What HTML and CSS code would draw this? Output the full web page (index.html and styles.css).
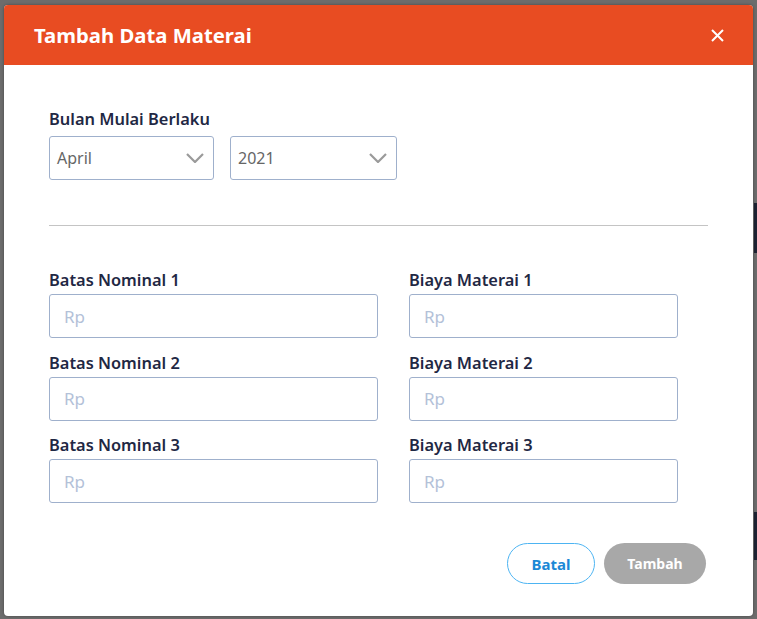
FILE: index.html
```html
<!DOCTYPE html>
<html lang="id">
<head>
<meta charset="utf-8">
<title>Tambah Data Materai</title>
<link rel="stylesheet" href="styles.css">
</head>
<body>
<div class="backdrop">
  <div class="modal">
    <header class="modal-header">
      <h2 class="modal-title">Tambah Data Materai</h2>
      <button class="close-btn" aria-label="Tutup">
        <svg width="13" height="13" viewBox="0 0 13 13"><path d="M1 1 L12 12 M12 1 L1 12" stroke="#fff" stroke-width="2" fill="none"/></svg>
      </button>
    </header>
    <div class="modal-body">
      <div class="period">
        <div class="label">Bulan Mulai Berlaku</div>
        <div class="selects">
          <div class="select select-month">
            <span>April</span>
            <svg class="chevron" width="18" height="10" viewBox="0 0 18 10"><path d="M1 1 L9 9 L17 1" stroke="#9a9a9a" stroke-width="2.2" fill="none"/></svg>
          </div>
          <div class="select select-year">
            <span>2021</span>
            <svg class="chevron" width="18" height="10" viewBox="0 0 18 10"><path d="M1 1 L9 9 L17 1" stroke="#9a9a9a" stroke-width="2.2" fill="none"/></svg>
          </div>
        </div>
      </div>
      <div class="divider"></div>
      <div class="fields">
        <div class="field"><div class="label">Batas Nominal 1</div><div class="input">Rp</div></div>
        <div class="field"><div class="label">Biaya Materai 1</div><div class="input">Rp</div></div>
        <div class="field"><div class="label">Batas Nominal 2</div><div class="input">Rp</div></div>
        <div class="field"><div class="label">Biaya Materai 2</div><div class="input">Rp</div></div>
        <div class="field"><div class="label">Batas Nominal 3</div><div class="input">Rp</div></div>
        <div class="field"><div class="label">Biaya Materai 3</div><div class="input">Rp</div></div>
      </div>
      <div class="actions">
        <button class="btn btn-cancel">Batal</button>
        <button class="btn btn-submit">Tambah</button>
      </div>
    </div>
  </div>
</div>
</body>
</html>
```
FILE: styles.css
```css
* { box-sizing: border-box; }
html, body { margin: 0; padding: 0; }
body {
  width: 757px;
  height: 619px;
  overflow: hidden;
  font-family: "Noto Sans", "Open Sans", sans-serif;
  background:
    linear-gradient(#1d2333, #1d2333) 754px 203px / 3px 50px no-repeat,
    linear-gradient(#1d2333, #1d2333) 754px 512px / 3px 48px no-repeat,
    #6c6c6c;
}
.backdrop {
  padding: 5px 4px 3px 4px;
}
.modal {
  width: 749px;
  height: 611px;
  background: #fff;
  border-radius: 4px;
  overflow: hidden;
  display: flex;
  flex-direction: column;
  box-shadow: 0 0 3px rgba(0,0,0,0.35);
}
.modal-header {
  height: 60px;
  background: #e84c22;
  display: flex;
  align-items: center;
  justify-content: space-between;
  padding: 0 29px 0 30px;
}
.modal-title {
  margin: 0;
  color: #fff;
  font-size: 20.3px;
  font-weight: 700;
  line-height: 28px;
}
.close-btn {
  background: none;
  border: 0;
  padding: 0;
  width: 13px;
  height: 13px;
  display: flex;
}
.modal-body {
  padding: 44px 45px 0 45px;
  display: flex;
  flex-direction: column;
}
.label {
  color: #1f2844;
  font-size: 16.4px;
  font-weight: 600;
  line-height: 20px;
}
.selects {
  display: flex;
  gap: 16px;
  margin-top: 7px;
}
.select {
  height: 44px;
  border: 1px solid #9fb0cc;
  border-radius: 3px;
  display: flex;
  align-items: center;
  justify-content: space-between;
  padding: 0 9px 0 7px;
  color: #666;
  font-size: 16px;
}
.select-month { width: 165px; }
.select-year { width: 167px; }
.divider {
  height: 1px;
  background: #c4c4c4;
  margin-top: 45px;
}
.fields {
  margin-top: 44px;
  display: grid;
  grid-template-columns: 329px 269px;
  column-gap: 31px;
  row-gap: 14.5px;
}
.field .label { margin-bottom: 4px; }
.input {
  height: 44px;
  border: 1px solid #9fb0cc;
  border-radius: 3px;
  display: flex;
  align-items: center;
  padding-left: 14px;
  color: #b3c1d8;
  font-size: 17px;
}
.actions {
  display: flex;
  justify-content: flex-end;
  gap: 9px;
  margin-top: 40px;
  margin-right: 2px;
}
.btn {
  height: 41px;
  border-radius: 21px;
  font-family: inherit;
  font-size: 15px;
  font-weight: 700;
  padding: 0;
}
.btn-cancel {
  width: 88px;
  background: #fff;
  border: 1.5px solid #4db4f2;
  color: #1b88d6;
}
.btn-submit {
  width: 102px;
  background: #a8a8a8;
  border: 0;
  color: #fff;
  font-size: 14px;
}
```
